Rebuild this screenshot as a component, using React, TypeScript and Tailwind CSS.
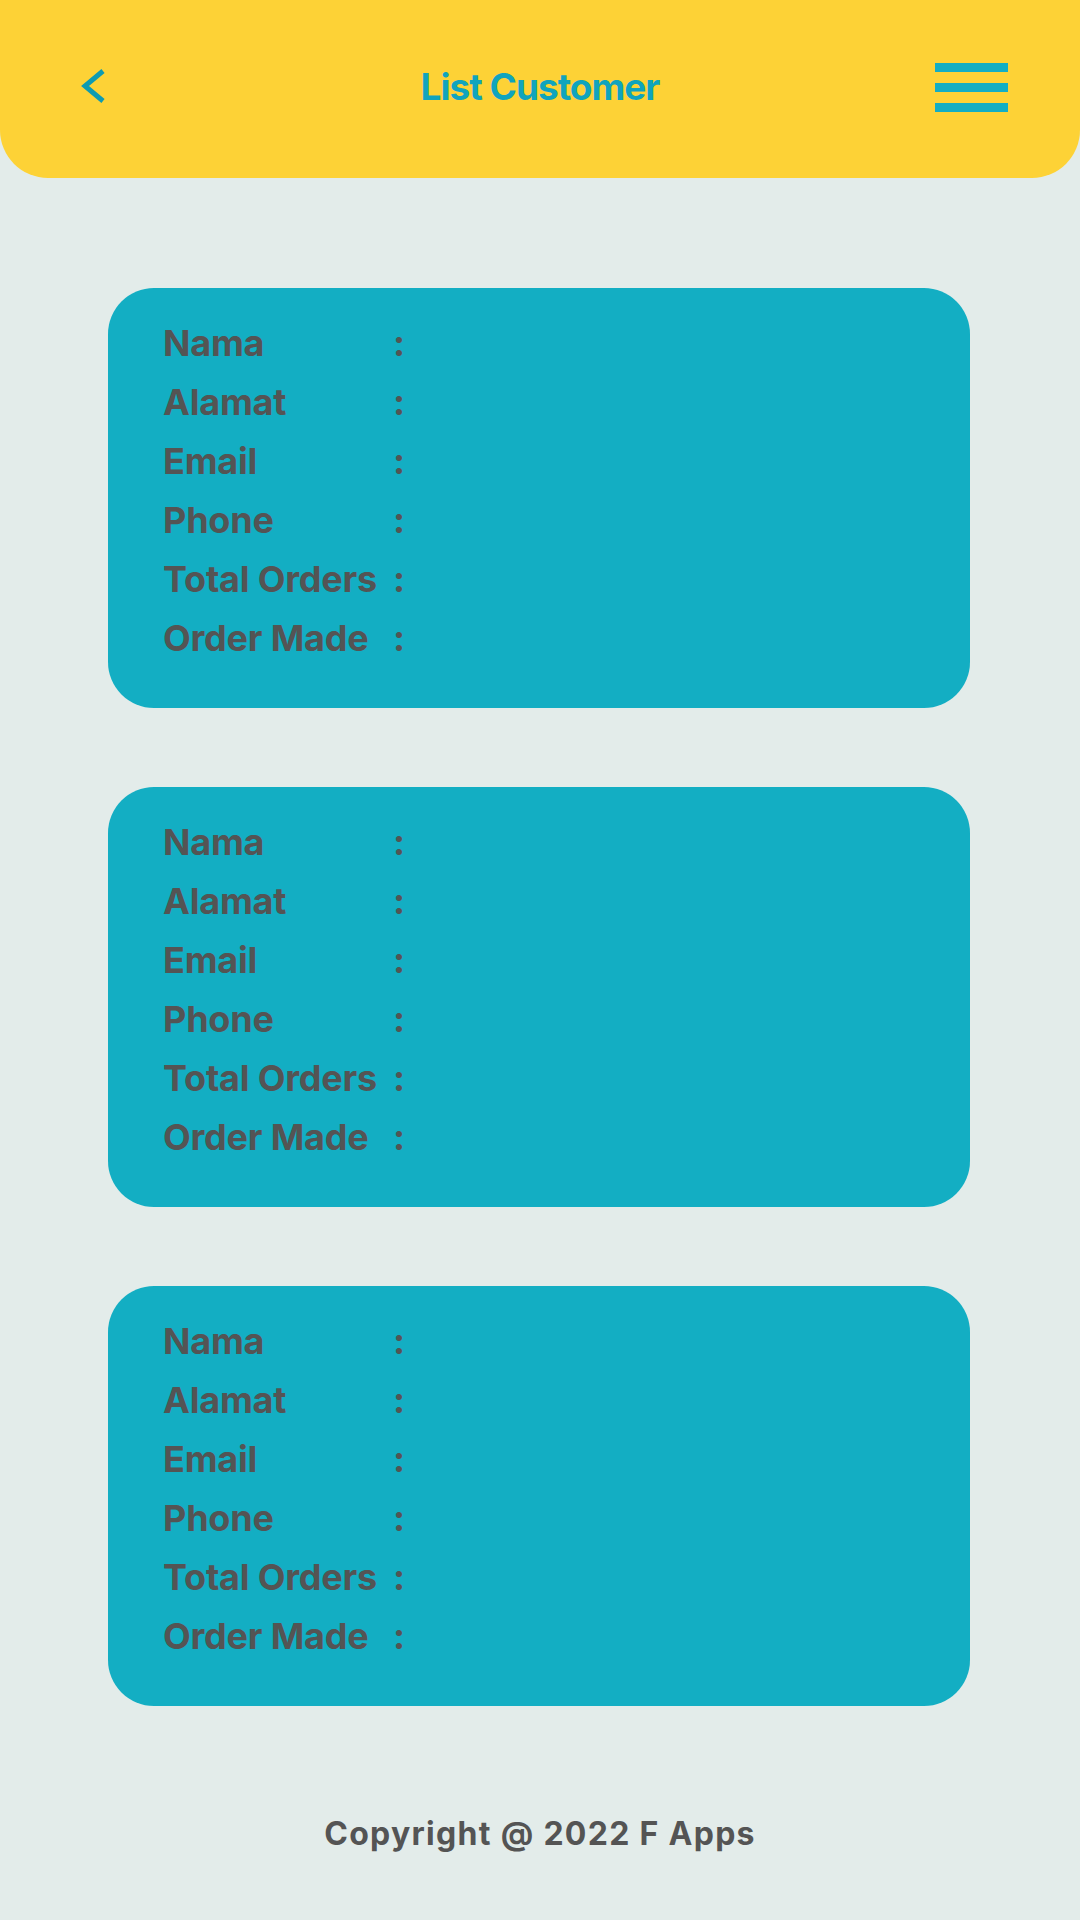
const fields = ['Nama', 'Alamat', 'Email', 'Phone', 'Total Orders', 'Order Made'];

const CustomerCard = () => {
    return (
        <div className="h-[420px] w-[862px] rounded-[46px] bg-[#13aec3] pl-[55px] pt-[26px]">
            {fields.map((f) => (
                <div key={f} className="flex h-[59px] items-center text-[36px] font-bold leading-[59px] tracking-[-0.2px] text-[#545454]">
                    <span className="w-[230px]">{f}</span>
                    <span>:</span>
                </div>
            ))}
        </div>
    );
};

const App = () => {
    return (
        <div className="flex h-[1920px] w-[1080px] flex-col bg-[#e3ecea] font-['Inter','Liberation_Sans',sans-serif]">
            <div className="flex h-[178px] w-full items-start rounded-b-[48px] bg-[#fdd236] pt-[63px]">
                <div className="relative flex h-[48px] w-full items-center">
                    <svg className="ml-[81px]" width="26" height="36" viewBox="0 0 26 36" fill="none">
                        <polyline points="22,2 4,17 22,32" stroke="#0e9bb1" strokeWidth="5" strokeLinejoin="miter" />
                    </svg>
                    <h1 className="absolute left-0 right-0 text-center text-[37px] font-bold tracking-[-1px] text-[#10a4bd]">
                        List Customer
                    </h1>
                    <div className="ml-auto mr-[72px] flex flex-col gap-[11px]">
                        <div className="h-[9px] w-[73px] bg-[#13aec3]" />
                        <div className="h-[9px] w-[73px] bg-[#13aec3]" />
                        <div className="h-[9px] w-[73px] bg-[#13aec3]" />
                    </div>
                </div>
            </div>

            <div className="mt-[110px] flex flex-col gap-[79px] pl-[108px]">
                <CustomerCard />
                <CustomerCard />
                <CustomerCard />
            </div>

            <p className="mt-[112px] text-center text-[32px] font-bold leading-none tracking-[1.3px] text-[#545454]">
                Copyright @ 2022 F Apps
            </p>
        </div>
    );
};

export default App;
